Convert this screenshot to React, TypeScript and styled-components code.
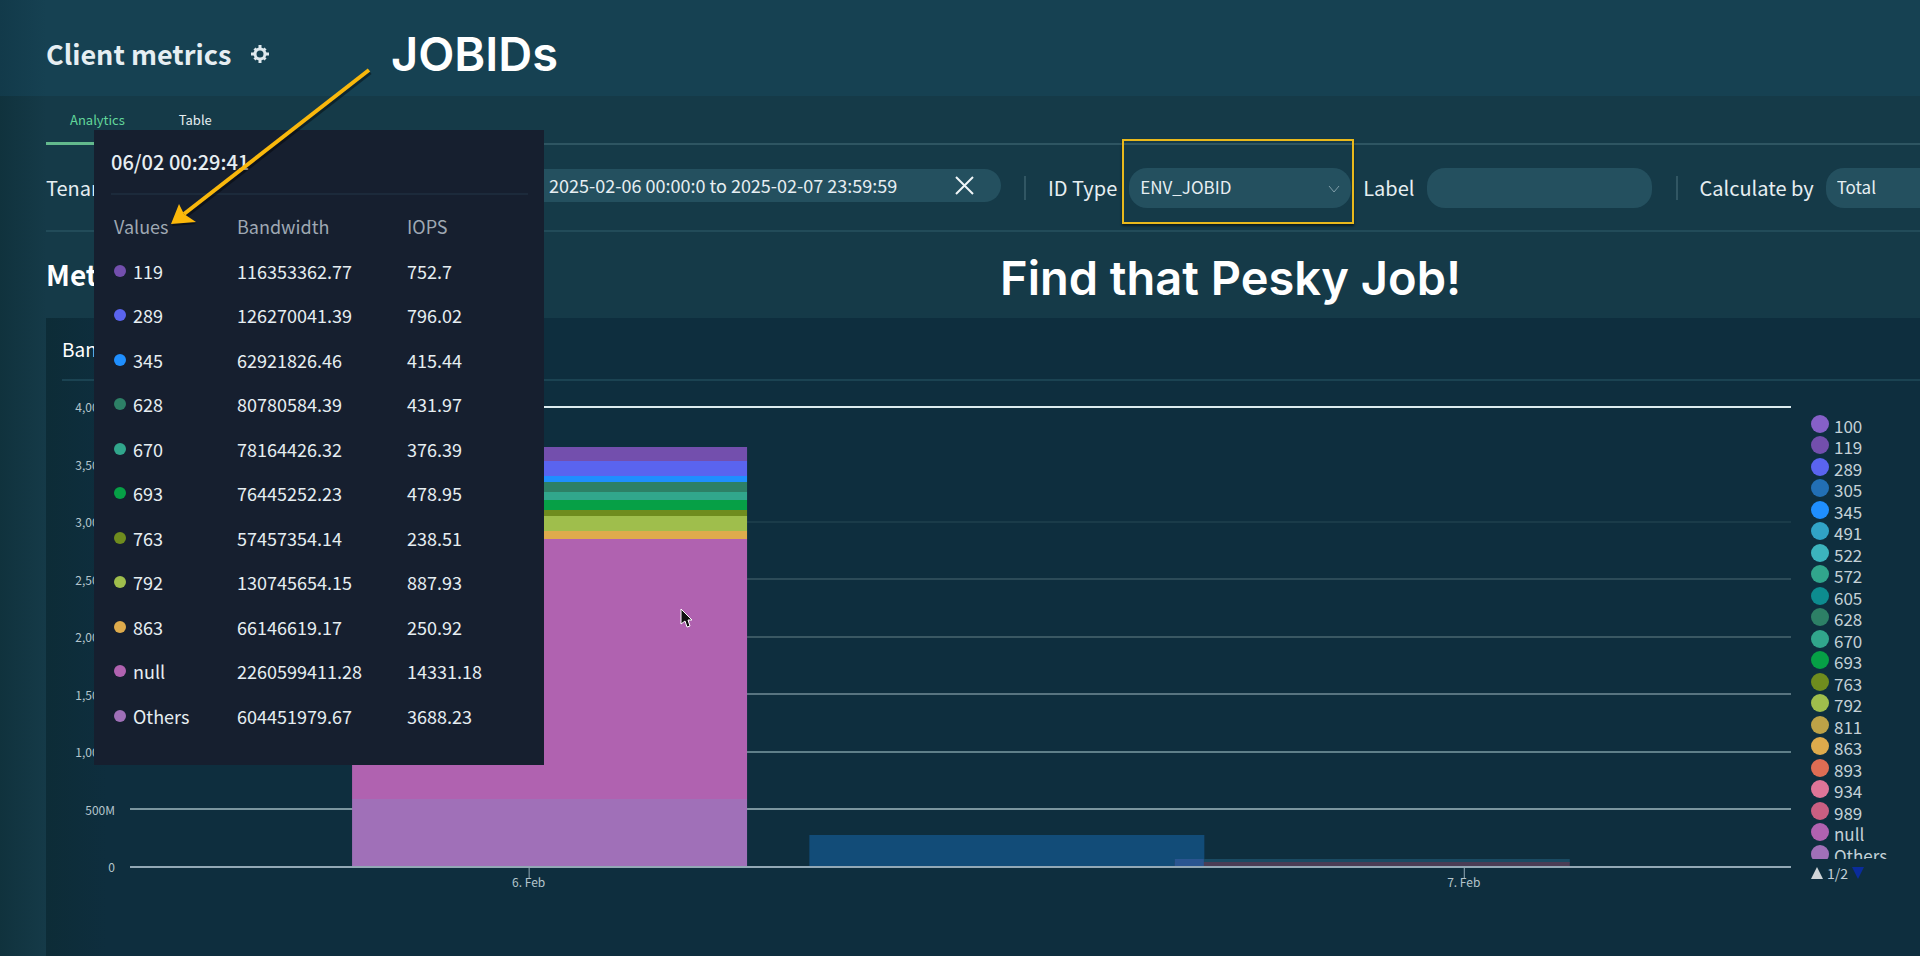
import React from 'react';
import styled, { createGlobalStyle } from 'styled-components';

const Global = createGlobalStyle`
  * { box-sizing: border-box; }
  body {
    margin: 0;
    overflow: hidden;
    background: #153a48;
    color: #e6eef2;
    font-family: "Noto Sans CJK SC", "Noto Sans", sans-serif;
  }
  button, input, select { font: inherit; color: inherit; border: 0; background: none; padding: 0; margin: 0; }
`;

const Page = styled.div`
  position: relative;
  min-height: 100vh;
  display: flex;
  flex-direction: column;
  overflow: hidden;
  background: linear-gradient(90deg, #10323d 0, #153a48 46px);
`;

const Header = styled.header`
  display: flex;
  align-items: center;
  gap: 20px;
  height: 96px;
  padding: 12px 46px 0;
  background: linear-gradient(90deg, #123a4a 0, #164152 46px);
`;

const Title = styled.h1`
  margin: 0;
  font-size: 27px;
  line-height: 40px;
  font-weight: 700;
`;

const GearButton = styled.button`
  display: flex;
`;

const Body = styled.div`
  flex: 1;
  display: flex;
  flex-direction: column;
  padding-left: 46px;
`;

const Tabs = styled.nav`
  display: flex;
  height: 49px;
  border-bottom: 2px solid #2e5562;
`;

const Tab = styled.button<{ $active?: boolean }>`
  height: 49px;
  padding: 2px 24px 0;
  margin-right: 6px;
  font-size: 13px;
  line-height: 40px;
  color: ${p => (p.$active ? '#62d69b' : '#e6eef2')};
  border-bottom: 3px solid ${p => (p.$active ? '#63b98d' : 'transparent')};
`;

const Filters = styled.div`
  display: flex;
  align-items: center;
  height: 87px;
  border-bottom: 2px solid #224b59;
`;

const Field = styled.div<{ $width?: number }>`
  display: flex;
  align-items: center;
  flex: none;
  gap: 12px;
  width: ${p => (p.$width ? `${p.$width}px` : 'auto')};
`;

const FieldLabel = styled.label`
  font-size: 20px;
  line-height: 30px;
  white-space: nowrap;
`;

const Pill = styled.div<{ $width: number; $height?: number }>`
  position: relative;
  display: flex;
  align-items: center;
  flex: none;
  width: ${p => p.$width}px;
  height: ${p => p.$height ?? 40}px;
  border-radius: 18px;
  background: #24505f;
  font-size: 17px;
`;

const Select = styled.select`
  appearance: none;
  width: 100%;
  height: 100%;
  padding: 0 11px 2px;
`;

const TextInput = styled.input`
  width: 100%;
  height: 100%;
  padding: 0 12px;
`;

const DatePill = styled(Pill)`
  margin-bottom: 4px;
  font-size: 18px;
`;

const DateInput = styled(TextInput)`
  padding: 0 0 2px 39px;
`;

const ClearButton = styled.button`
  display: flex;
  flex: none;
  margin-right: 27px;
`;

const Chevron = styled.svg`
  position: absolute;
  right: 11px;
  top: 17px;
  pointer-events: none;
`;

const Separator = styled.span<{ $before: number; $after: number }>`
  flex: none;
  width: 2px;
  height: 24px;
  margin: 0 ${p => p.$after}px 0 ${p => p.$before}px;
  background: #315663;
`;

const Section = styled.h2`
  margin: 0;
  height: 86px;
  font-size: 28px;
  line-height: 85px;
  font-weight: 700;
  color: #fff;
`;

const Card = styled.section`
  flex: 1;
  padding-left: 16px;
  background: linear-gradient(90deg, #0d2c37 0, #0e2e3e 60px);
`;

const CardTitle = styled.h3`
  margin: 0;
  height: 63px;
  border-bottom: 2px solid #1b4352;
  font-size: 19px;
  line-height: 62px;
  font-weight: 400;
  color: #fff;
`;

const ChartRow = styled.div`
  display: flex;
  padding-top: 16px;
`;

const YAxis = styled.div`
  display: flex;
  flex-direction: column;
  justify-content: space-between;
  flex: none;
  width: 53px;
  height: 480px;
  font-size: 12px;
  line-height: 20px;
  text-align: right;
  color: #b4c5cc;
`;

const Plot = styled.svg`
  flex: 1;
  min-width: 0;
  height: 500px;
  margin-left: 15px;
  display: block;
`;

const LegendBox = styled.aside`
  flex: none;
  width: 129px;
  padding: 18px 0 0 20px;
`;

const LegendClip = styled.div`
  height: 444px;
  overflow: hidden;
`;

const LegendList = styled.ul`
  display: grid;
  grid-auto-rows: 1fr;
  height: 451px;
  margin: 0;
  padding: 0;
  list-style: none;
`;

const LegendItem = styled.li`
  display: flex;
  align-items: flex-start;
  gap: 5px;
  font-size: 17px;
  line-height: 21px;
  color: #c3d1d7;
`;

const Dot = styled.span<{ $color: string; $size: number }>`
  flex: none;
  width: ${p => p.$size}px;
  height: ${p => p.$size}px;
  border-radius: 50%;
  background: ${p => p.$color};
`;

const Pager = styled.div`
  display: flex;
  align-items: center;
  gap: 4px;
  padding-top: 4px;
  font-size: 14px;
  line-height: 20px;
  color: #c3d1d7;
  button { display: flex; }
`;

const Tooltip = styled.div`
  position: absolute;
  left: 94px;
  top: 130px;
  width: 450px;
  height: 635px;
  padding: 15px 16px 0 17px;
  background: #161f2f;
`;

const TooltipTitle = styled.div`
  height: 50px;
  border-bottom: 2px solid #1c2a3b;
  font-size: 20px;
  line-height: 34px;
  font-weight: 500;
`;

const DataTable = styled.table`
  width: 100%;
  margin-top: 8px;
  border-collapse: collapse;
  table-layout: fixed;
  font-size: 18px;
  line-height: 24px;
  tr { height: 45px; }
  tbody tr:nth-child(even) { height: 44px; }
  th, td { padding: 0 0 0 3px; text-align: left; font-weight: 400; }
  th { color: #9fa8b3; }
`;

const Col = styled.col<{ $width?: number }>`
  width: ${p => (p.$width ? `${p.$width}px` : 'auto')};
`;

const Key = styled.span`
  display: flex;
  align-items: center;
  gap: 7px;
`;

const Callout = styled.p<{ $left: number; $top: number }>`
  position: absolute;
  left: ${p => p.$left}px;
  top: ${p => p.$top}px;
  margin: 0;
  font-family: Inter, sans-serif;
  font-size: 47px;
  line-height: 56px;
  font-weight: 600;
  color: #fff;
  white-space: nowrap;
`;

const Arrow = styled.svg`
  position: absolute;
  left: 160px;
  top: 60px;
  pointer-events: none;
`;

const Highlight = styled.div`
  position: absolute;
  inset: -29px -3px -16px -7px;
  border: 2px solid #e9b91c;
  box-shadow: 0 2px 2px rgba(0, 0, 0, 0.5);
  pointer-events: none;
`;

const Cursor = styled.svg`
  position: absolute;
  left: 680px;
  top: 608px;
`;

const tooltipRows: [string, string, string, string][] = [
  ['119', '116353362.77', '752.7', '#734fad'],
  ['289', '126270041.39', '796.02', '#5a64ef'],
  ['345', '62921826.46', '415.44', '#1f8fff'],
  ['628', '80780584.39', '431.97', '#2d8066'],
  ['670', '78164426.32', '376.39', '#31a68c'],
  ['693', '76445252.23', '478.95', '#06a046'],
  ['763', '57457354.14', '238.51', '#6f8c1e'],
  ['792', '130745654.15', '887.93', '#9fbe4c'],
  ['863', '66146619.17', '250.92', '#deab4c'],
  ['null', '2260599411.28', '14331.18', '#b062b0'],
  ['Others', '604451979.67', '3688.23', '#a070b8'],
];

const legend: [string, string][] = [
  ['100', '#8660c8'], ['119', '#734fad'], ['289', '#5a64ef'], ['305', '#226fb4'],
  ['345', '#1f8fff'], ['491', '#31a3c6'], ['522', '#3cb4bd'], ['572', '#31a68c'],
  ['605', '#0d8c8f'], ['628', '#2d8066'], ['670', '#31a68c'], ['693', '#06a046'],
  ['763', '#6f8c1e'], ['792', '#9fbe4c'], ['811', '#bda247'], ['863', '#deab4c'],
  ['893', '#de6d54'], ['934', '#de7598'], ['989', '#c95f82'], ['null', '#b062b0'],
  ['Others', '#a070b8'],
];

const yTicks = ['4,000M', '3,500M', '3,000M', '2,500M', '2,000M', '1,500M', '1,000M', '500M', '0'];

const gridLines: [number, string][] = [
  [10, '#dcebee'], [125, '#1a3b49'], [182, '#2c4b58'], [240, '#3a5863'],
  [297, '#587480'], [355, '#5f7f89'], [412, '#7b969f'],
];

const stack: [number, number, string][] = [
  [50, 14, '#734fad'], [64, 15, '#5a64ef'], [79, 6, '#1f8fff'], [85, 10, '#2d8066'],
  [95, 8, '#31a68c'], [103, 10, '#06a046'], [113, 6, '#6f8c1e'], [119, 15, '#9fbe4c'],
  [134, 8, '#deab4c'], [142, 260, '#b062b0'], [402, 68, '#a070b8'],
];

function Chart() {
  return (
    <Plot role="img" aria-label="Bandwidth by job">
      {gridLines.map(([y, color]) => (
        <rect key={y} x="0" y={y - 1} width="100%" height="2" fill={color} />
      ))}
      {stack.map(([y, h, color]) => (
        <rect key={y} x="13.37%" y={y} width="23.78%" height={h} fill={color} />
      ))}
      <rect x="40.9%" y="438" width="23.78%" height="32" fill="#124c78" />
      <rect x="62.9%" y="462" width="23.78%" height="4" fill="#1a4a62" />
      <rect x="62.9%" y="465" width="23.78%" height="5" fill="#4a3d55" />
      <rect x="62.9%" y="462" width="1.75%" height="8" fill="#2a5590" />
      <rect x="0" y="469" width="100%" height="2" fill="#92a8b5" />
      {[['24%', '6. Feb'], ['80.3%', '7. Feb']].map(([x, label]) => (
        <g key={label}>
          <rect x={x} y="470" width="1" height="11" fill="#92a8b5" />
          <text x={x} y="490" textAnchor="middle" fontSize="12" fill="#b4c5cc">{label}</text>
        </g>
      ))}
    </Plot>
  );
}

export default function App() {
  return (
    <>
      <Global />
      <Page>
        <Header>
          <Title>Client metrics</Title>
          <GearButton aria-label="Settings">
            <svg width="18" height="18" viewBox="0 0 18 18" fill="none" stroke="#dfe9ee">
              <circle cx="9" cy="9" r="5" strokeWidth="3" />
              <path d="M9 0v3M9 15v3M0 9h3M15 9h3M3.500 3.500l2 2M12.500 12.500l2 2M3.500 14.500l2-2M12.500 5.500l2-2" strokeWidth="3" />
            </svg>
          </GearButton>
        </Header>
        <Body>
          <Tabs>
            <Tab $active>Analytics</Tab>
            <Tab>Table</Tab>
          </Tabs>
          <Filters>
            <Field $width={464}>
              <FieldLabel htmlFor="tenant">Tenant</FieldLabel>
              <Pill $width={222}><Select id="tenant" /></Pill>
            </Field>
            <DatePill $width={491} $height={33}>
              <DateInput aria-label="Time range" defaultValue="2025-02-06 00:00:0 to 2025-02-07 23:59:59" />
              <ClearButton aria-label="Clear">
                <svg width="19" height="19" viewBox="0 0 19 19" stroke="#f0f6f8" strokeWidth="2">
                  <path d="M1 1l17 17M18 1L1 18" />
                </svg>
              </ClearButton>
            </DatePill>
            <Separator $before={23} $after={22} />
            <Field>
              <FieldLabel htmlFor="idtype">ID Type</FieldLabel>
              <Pill $width={222}>
                <Select id="idtype" defaultValue="ENV_JOBID"><option>ENV_JOBID</option></Select>
                <Chevron width="12" height="8" viewBox="0 0 12 8" fill="none" stroke="#7f9da8" strokeWidth="1">
                  <path d="M1 1l5 6 5-6" />
                </Chevron>
                <Highlight />
              </Pill>
              <FieldLabel htmlFor="label">Label</FieldLabel>
              <Pill $width={225}><TextInput id="label" /></Pill>
            </Field>
            <Separator $before={24} $after={22} />
            <Field>
              <FieldLabel htmlFor="calc">Calculate by</FieldLabel>
              <Pill $width={222}>
                <Select id="calc" defaultValue="Total"><option>Total</option></Select>
              </Pill>
            </Field>
          </Filters>
          <Section>Metrics</Section>
          <Card>
            <CardTitle>Bandwidth</CardTitle>
            <ChartRow>
              <YAxis>{yTicks.map(t => <span key={t}>{t}</span>)}</YAxis>
              <Chart />
              <LegendBox>
                <LegendClip>
                  <LegendList>
                    {legend.map(([name, color]) => (
                      <LegendItem key={name}>
                        <Dot $color={color} $size={18} />
                        <span>{name}</span>
                      </LegendItem>
                    ))}
                  </LegendList>
                </LegendClip>
                <Pager>
                  <button aria-label="Previous">
                    <svg width="12" height="12"><path d="M6 0l6 12H0z" fill="#d0d5d8" /></svg>
                  </button>
                  <span>1/2</span>
                  <button aria-label="Next">
                    <svg width="12" height="12"><path d="M0 0h12L6 12z" fill="#0a2c9c" /></svg>
                  </button>
                </Pager>
              </LegendBox>
            </ChartRow>
          </Card>
        </Body>
        <Cursor width="14" height="20" viewBox="0 0 14 20">
          <path d="M1 1v15l4-3 2 6 3-1-2-6h4z" fill="#111" stroke="#fff" strokeWidth="1" />
        </Cursor>
        <Tooltip>
          <TooltipTitle>06/02 00:29:41</TooltipTitle>
          <DataTable>
            <colgroup>
              <Col $width={123} />
              <Col $width={170} />
              <Col />
            </colgroup>
            <thead>
              <tr><th>Values</th><th>Bandwidth</th><th>IOPS</th></tr>
            </thead>
            <tbody>
              {tooltipRows.map(([name, bandwidth, iops, color]) => (
                <tr key={name}>
                  <td><Key><Dot $color={color} $size={12} />{name}</Key></td>
                  <td>{bandwidth}</td>
                  <td>{iops}</td>
                </tr>
              ))}
            </tbody>
          </DataTable>
        </Tooltip>
        <Arrow width="220" height="175" viewBox="0 0 220 175">
          <g transform="translate(1 2)" opacity="0.4">
            <path d="M209 10L24 154" stroke="#000" strokeWidth="5" />
            <path d="M11 164l8-19 4 10 12 7z" fill="#000" />
          </g>
          <path d="M209 10L24 154" stroke="#f9b80c" strokeWidth="4" />
          <path d="M11 164l8-20 5 10 12 8z" fill="#fcb80a" />
        </Arrow>
        <Callout $left={391} $top={26}>JOBIDs</Callout>
        <Callout $left={1000} $top={250}>Find that Pesky Job!</Callout>
      </Page>
    </>
  );
}
